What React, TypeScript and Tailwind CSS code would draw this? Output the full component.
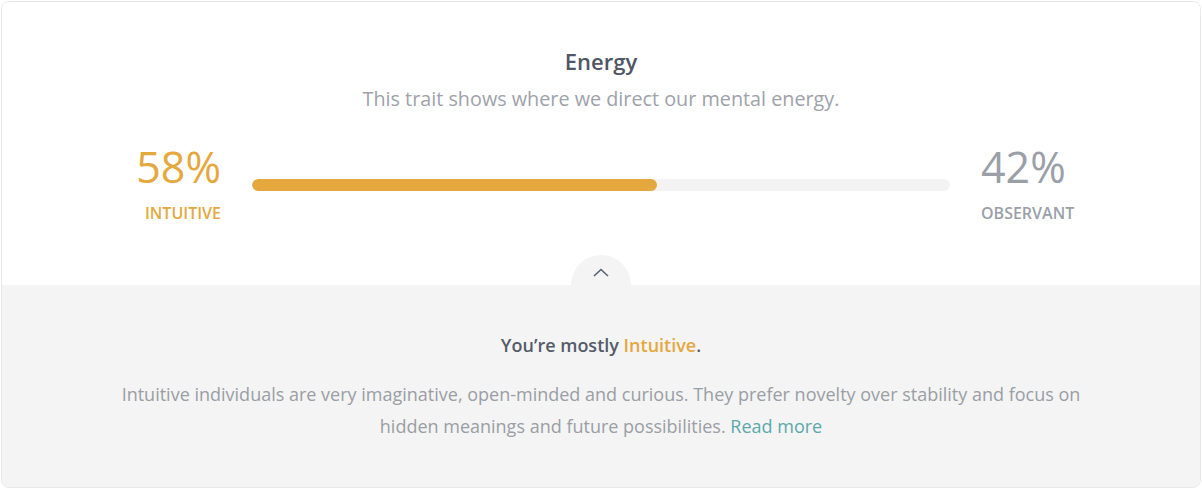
import React from "react";

export default function App() {
  const font = { fontFamily: '"Open Sans", "Noto Sans", sans-serif' };
  return (
    <div className="w-[1202px] h-[489px] bg-white p-px" style={font}>
      <div className="w-[1200px] h-[487px] border border-[#e8e8e8] rounded-[8px] overflow-hidden flex flex-col">
        <div className="h-[283px] bg-white flex flex-col items-center pt-[44px]">
          <div className="text-[22px] leading-[30px] font-semibold text-[#505665]">Energy</div>
          <div className="text-[19.8px] leading-[28px] text-[#9ea2aa] mt-[9px]">This trait shows where we direct our mental energy.</div>
          <div className="w-[960px] flex items-start gap-[31px] mt-[27px]">
            <div className="w-[100px] flex flex-col items-end">
              <div className="text-[43px] leading-[54px] text-[#e4a83f]">58%</div>
              <div className="text-[16px] leading-[22px] font-semibold text-[#e4a83f] mt-[8px]">INTUITIVE</div>
            </div>
            <div className="flex-1 h-[12px] rounded-full bg-[#f3f3f3] mt-[39px] overflow-hidden">
              <div className="h-full rounded-full bg-[#e4a83f]" style={{ width: "58%" }} />
            </div>
            <div className="w-[100px] flex flex-col items-start">
              <div className="text-[43px] leading-[54px] text-[#9b9fa8]">42%</div>
              <div className="text-[16px] leading-[22px] font-semibold text-[#9b9fa8] mt-[8px]">OBSERVANT</div>
            </div>
          </div>
        </div>
        <div className="relative flex-1 bg-[#f4f4f4] flex flex-col items-center">
          <div className="absolute left-1/2 -translate-x-1/2 -top-[30px] w-[60px] h-[60px] rounded-full bg-[#f4f4f4] flex justify-center pt-[12px]">
            <svg width="18" height="12" viewBox="0 0 18 12" fill="none">
              <path d="M2 9 L9 2.5 L16 9" stroke="#586173" strokeWidth="1.6" />
            </svg>
          </div>
          <div className="mt-[47px] text-[18px] leading-[26px] font-semibold text-[#555b68]">
            You’re mostly <span className="text-[#e4a83f]">Intuitive</span>.
          </div>
          <p className="w-[960px] text-center text-[18px] leading-[32px] text-[#9a9ea5] mt-[20px]">
            Intuitive individuals are very imaginative, open-minded and curious. They prefer novelty over stability and focus on hidden meanings and future possibilities. <a className="text-[#5aa8ab]">Read more</a>
          </p>
        </div>
      </div>
    </div>
  );
}
